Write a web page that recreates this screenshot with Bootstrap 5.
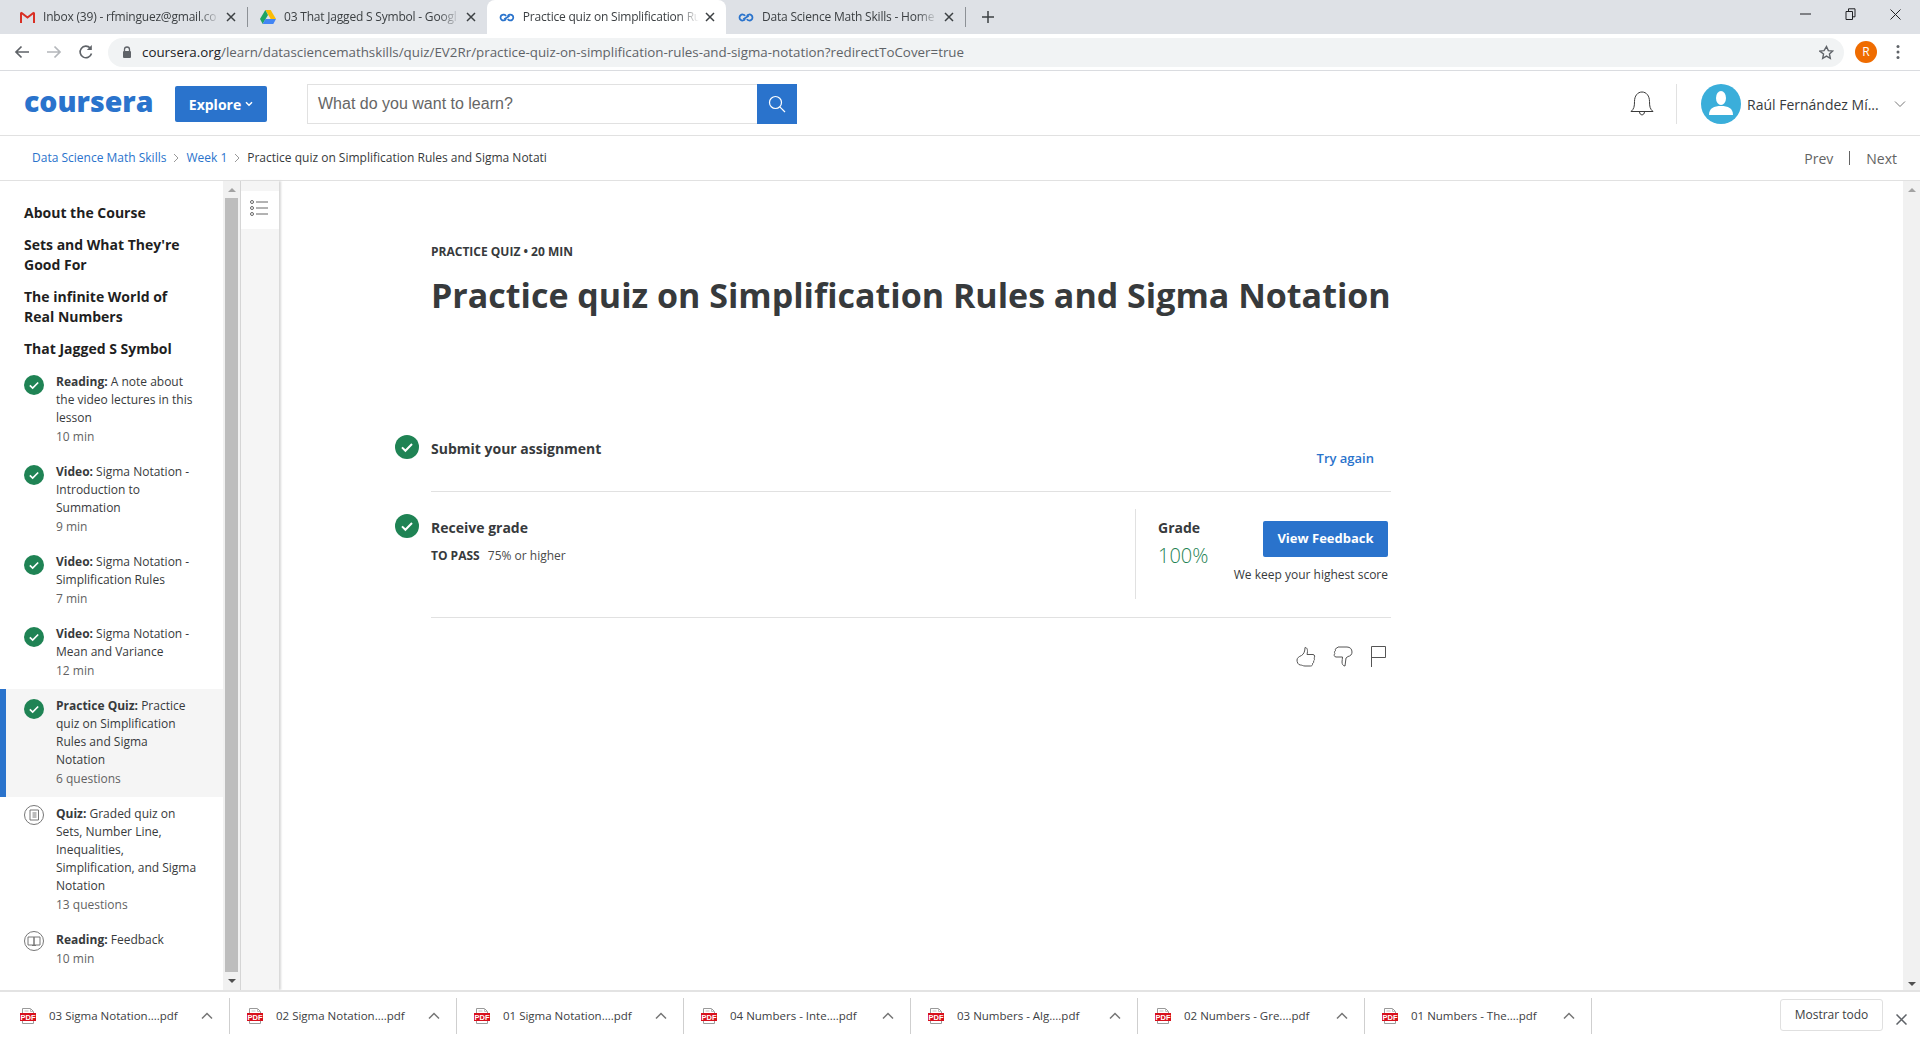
<!DOCTYPE html>
<html lang="en">
<head>
  <meta charset="UTF-8">
  <meta name="viewport" content="width=device-width, initial-scale=1.0">
  <title>Practice quiz on Simplification Rules and Sigma Notation</title>
  <link href="https://cdn.jsdelivr.net/npm/bootstrap@5.3.0/dist/css/bootstrap.min.css" rel="stylesheet">
  <style>
    html, body { height: 100%; overflow: hidden; }
    body { font-family: "Open Sans", "Liberation Sans", sans-serif; color: #373a3c; background: #fff; }
    a { text-decoration: none; }

    /* browser chrome */
    .tab-strip { height: 34px; background: #dee1e6; padding-left: 8px; }
    .tab-item { width: 239px; height: 34px; padding: 0 11px 0 12px; font-size: 12px; color: #3c4043; position: relative; }
    .tab-item.tab-on { background: #fff; border-radius: 8px 8px 0 0; color: #3c4043; }
    .tab-sep { border-right: 1px solid #8d9196; height: 20px; align-self: center; }
    .tab-label { flex: 1 1 auto; overflow: hidden; white-space: nowrap; margin-left: 8px; letter-spacing: -.2px;
      -webkit-mask-image: linear-gradient(to right, #000 88%, transparent); mask-image: linear-gradient(to right, #000 88%, transparent); }
    .tab-x { width: 10px; height: 10px; margin-left: 6px; flex: none; }
    .win-btns { margin-left: auto; gap: 34px; padding-right: 19px; height: 28px; }
    .addr-row { height: 37px; padding: 0 0 0 14px; border-bottom: 1px solid #dadce0; background: #fff; }
    .addr-pill { width: 1736px; height: 29px; margin-left: 14px; background: #f1f3f4; border-radius: 15px; padding: 0 10px 0 14px; font-size: 13.35px; color: #5f6368; }
    .addr-pill b { font-weight: 400; color: #202124; }
    .addr-url { margin-left: 10px; }
    .avatar-r { width: 22px; height: 22px; border-radius: 50%; background: #ef6c00; color: #fff; font-size: 12px; margin-left: 11px; }
    .menu-dots { margin-left: 19px; }

    /* coursera header */
    .site-head { height: 65px; padding: 2px 0 0 24px; border-bottom: 1px solid #e1e1e1; }
    .site-logo { width: 128px; color: #2a73cc; font-family: "Open Sans", sans-serif; font-weight: 800; font-size: 28.5px; line-height: 1; margin-top: -6px; }
    .explore-btn { width: 92px; height: 36px; margin-left: 23px; background: #2a73cc; border: 0; border-radius: 2px; color: #fff; font-size: 14px; font-weight: 700; padding: 0; }
    .search-box { margin-left: 40px; width: 490px; height: 40px; }
    .search-field { width: 450px; height: 40px; border: 1px solid #e1e1e1; border-right: 0; font-family: "Liberation Sans", sans-serif; font-size: 16px; color: #666; padding: 0 10px; line-height: 38px; }
    .search-btn { width: 40px; height: 40px; background: #2a73cc; }
    .head-right { margin-left: auto; padding-right: 14px; }
    .head-div { width: 1px; height: 40px; background: #e1e1e1; margin: 0 24px 0 22px; }
    .user-pic { width: 40px; height: 40px; }
    .user-name { width: 147px; margin-left: 6px; font-size: 14px; color: #373a3c; white-space: nowrap; }

    /* breadcrumb */
    .crumb-row { height: 45px; padding: 0 23px 0 32px; border-bottom: 1px solid #e1e1e1; font-size: 12px; color: #373a3c; }
    .crumb-row a { color: #2a73cc; }
    .crumb-gt { margin: 0 7px; width: 6px; height: 10px; }
    .pager { margin-left: auto; font-size: 14px; color: #636363; }
    .pager i { display: block; width: 1px; height: 14px; background: #636363; margin: 0 16px; }

    /* work area */
    .work-area { height: 809px; }
    .side-list { width: 223px; flex: none; padding-top: 22px; }
    .side-head { padding: 0 24px; margin-bottom: 12px; font-size: 14px; line-height: 20px; font-weight: 700; color: #1f1f1f; width: 210px; }
    .side-head-last { margin-bottom: 6px; }
    .side-item { display: flex; gap: 12px; padding: 8px 0 8px 24px; font-size: 12px; line-height: 18px; }
    .side-item.side-on { background: #f5f5f5; box-shadow: inset 6px 0 0 #2a73cc; }
    .side-item svg { margin-top: 2px; flex: none; }
    .side-item svg.ico-plain { margin-top: 0; }
    .side-text { width: 142px; color: #373a3c; }
    .side-text b { font-weight: 700; }
    .side-meta { line-height: 20px; color: #636363; }
    .scroll-track { width: 17px; flex: none; background: #f1f1f1; padding: 0 2px; }
    .scroll-thumb { background: #bdbdbd; height: 774px; flex: none; }
    .arrow-up, .arrow-dn { width: 0; height: 0; border-left: 4px solid transparent; border-right: 4px solid transparent; margin: 0 auto; }
    .arrow-up { border-bottom: 4px solid #a3a3a3; margin-top: 7px; margin-bottom: 6px; }
    .arrow-dn { border-top: 4px solid #505050; margin-top: 7px; }
    .outline-strip { width: 39px; flex: none; background: #f5f5f5; border-left: 1px solid #d5d5d5; box-shadow: 2px 0 2px #d8d8d8; padding-top: 10px; }
    .outline-btn { height: 38px; background: #fff; padding: 0 3px 4px 0; }

    .quiz-pane { flex: 1 1 auto; padding: 62px 0 0 116px; }
    .quiz-col { width: 996px; }
    .quiz-kicker { margin-left: 36px; font-size: 12px; line-height: 18px; font-weight: 700; color: #373a3c; }
    .quiz-title { margin: 11px 0 0 36px; font-size: 34px; line-height: 46px; font-weight: 700; color: #373a3c; white-space: nowrap; }
    .step-row { display: flex; gap: 12px; }
    .step-row > svg { flex: none; }
    .step-body { flex: 1 1 auto; border-bottom: 1px solid #e1e1e1; }
    .submit-step { margin-top: 117px; }
    .submit-step .step-body { height: 57px; }
    .step-name { font-size: 14px; line-height: 20px; font-weight: 700; color: #373a3c; }
    .try-link { color: #2a73cc; font-size: 13px; font-weight: 600; margin: 14px 17px 0 0; line-height: 18px; }
    .grade-icon { margin-top: 22px; }
    .grade-step { height: 126px; }
    .grade-left { padding-top: 26px; }
    .pass-note { font-size: 12px; line-height: 18px; margin-top: 9px; color: #4a4a4a; }
    .pass-note b { color: #373a3c; margin-right: 5px; }
    .grade-box { width: 256px; height: 90px; margin: 17px 0 0 0; border-left: 1px solid #e1e1e1; padding: 0 3px 0 22px; }
    .grade-info { padding-top: 9px; }
    .grade-num { font-size: 20px; line-height: 28px; font-weight: 300; color: #1f8354; margin-top: 4px; }
    .feedback-btn { width: 125px; height: 36px; margin-top: 12px; background: #2a73cc; color: #fff; border: 0; border-radius: 2px; font-size: 13px; font-weight: 700; padding: 0; }
    .keep-note { font-size: 12px; line-height: 18px; margin-top: 9px; color: #373a3c; white-space: nowrap; }
    .react-row { margin: 27px 5px 0 0; gap: 17px; height: 22px; }

    /* downloads */
    .dl-bar { height: 50px; border-top: 2px solid #e3e3e3; padding-top: 6px; }
    .dl-item { width: 227px; height: 36px; border-right: 1px solid #cfcfcf; flex: none; font-size: 11.5px; color: #3c4043; padding: 0 16px 0 17px; }
    .dl-first { width: 230px; padding-left: 20px; }
    .dl-name { margin-left: 13px; flex: 1 1 auto; white-space: nowrap; }
    .show-all { width: 103px; height: 32px; margin-left: auto; margin-top: 1px; background: #fff; border: 1px solid #e0e0e0; border-radius: 3px; font-size: 12px; color: #3c4043; padding: 0; }
    .dl-close { margin: 1px 13px 0 13px; }
    .pdf-word { font-family: "Liberation Sans", sans-serif; font-size: 7.5px; font-weight: 700; fill: #fff; }
  </style>
</head>
<body>
  <svg width="0" height="0" class="d-block">
    <symbol id="chk" viewBox="0 0 24 24"><circle cx="12" cy="12" r="12" fill="#1f8354"/><path d="M7 12.400l3.400 3.400L17 9" fill="none" stroke="#fff" stroke-width="2"/></symbol>
    <symbol id="tabx" viewBox="0 0 10 10"><path d="M1 1l8 8M9 1l-8 8" stroke="#3c4043" stroke-width="1.500"/></symbol>
    <symbol id="cinf" viewBox="0 0 18 10"><path d="M8 3.200A3.400 3.400 0 1 0 8 6.800M10 3.200A3.400 3.400 0 1 1 10 6.800M6 7l6-4" fill="none" stroke="#2a73cc" stroke-width="2"/></symbol>
    <symbol id="pdf" viewBox="0 0 16 16"><path d="M2.500 5V.5h8l3 3V5M2.500 13v2.500h11V13" fill="none" stroke="#9a9a9a"/><path d="M10.500.5v3h3M4.500 3h4" fill="none" stroke="#bdbdbd"/><rect y="5" width="16" height="8" fill="#d80f1c"/><text class="pdf-word" x="8" y="11.700" text-anchor="middle">PDF</text></symbol>
    <symbol id="caret" viewBox="0 0 12 8"><path d="M1 6.500l5-5 5 5" fill="none" stroke="#777" stroke-width="1.500"/></symbol>
  </svg>

  <div class="d-flex flex-column vh-100">
    <!-- browser tabs -->
    <div class="tab-strip d-flex">
      <div class="tab-item d-flex align-items-center">
        <svg width="15" height="12" viewBox="0 0 15 12"><path d="M1 12V1.500M14 12V1.500" stroke="#d93025" stroke-width="2"/><path d="M1 1.500l6.500 5 6.500-5" fill="none" stroke="#d93025" stroke-width="2"/></svg>
        <span class="tab-label">Inbox (39) - rfminguez@gmail.co</span>
        <svg class="tab-x"><use href="#tabx"/></svg>
      </div>
      <div class="tab-sep"></div>
      <div class="tab-item d-flex align-items-center">
        <svg width="16" height="14" viewBox="0 0 16 14"><path d="M5.300 0h5.400l5.300 9h-5.300z" fill="#fbbc04"/><path d="M5.300 0L0 9l2.700 5 5.300-9z" fill="#1fa463"/><path d="M2.700 14h10.600l2.700-5H5.400z" fill="#4285f4"/></svg>
        <span class="tab-label">03 That Jagged S Symbol - Googl</span>
        <svg class="tab-x"><use href="#tabx"/></svg>
      </div>
      <div class="tab-item tab-on d-flex align-items-center">
        <svg width="16" height="9"><use href="#cinf"/></svg>
        <span class="tab-label">Practice quiz on Simplification Ru</span>
        <svg class="tab-x"><use href="#tabx"/></svg>
      </div>
      <div class="tab-item d-flex align-items-center">
        <svg width="16" height="9"><use href="#cinf"/></svg>
        <span class="tab-label">Data Science Math Skills - Home</span>
        <svg class="tab-x"><use href="#tabx"/></svg>
      </div>
      <div class="tab-sep"></div>
      <svg class="align-self-center ms-3" width="12" height="12" viewBox="0 0 12 12"><path d="M6 0v12M0 6h12" stroke="#3c4043" stroke-width="1.500"/></svg>
      <div class="win-btns d-flex align-items-center">
        <svg width="11" height="10" viewBox="0 0 11 10"><path d="M0 5h11" stroke="#202124"/></svg>
        <svg width="11" height="12" viewBox="0 0 11 12"><path d="M1 3.500h6.500v8H1zM3.500 3.500V.8H10v8H7.500" fill="none" stroke="#202124"/></svg>
        <svg width="11" height="11" viewBox="0 0 11 11"><path d="M.5.500l10 10M10.500.500l-10 10" stroke="#202124"/></svg>
      </div>
    </div>

    <!-- address bar -->
    <div class="addr-row d-flex align-items-center">
      <svg width="16" height="14" viewBox="0 0 16 14"><path d="M15 7H2M7.500 1.500L2 7l5.500 5.500" fill="none" stroke="#5f6368" stroke-width="1.700"/></svg>
      <svg class="ms-3" width="16" height="14" viewBox="0 0 16 14"><path d="M1 7h13M8.500 1.500L14 7l-5.500 5.500" fill="none" stroke="#b4b7bb" stroke-width="1.700"/></svg>
      <svg class="ms-3" width="16" height="16" viewBox="0 0 16 16"><path d="M13.500 9.500a5.800 5.800 0 1 1-1.300-5.500" fill="none" stroke="#5f6368" stroke-width="1.600"/><path d="M13.800 1v5h-5z" fill="#5f6368"/></svg>
      <div class="addr-pill d-flex align-items-center">
        <svg width="10" height="12" viewBox="0 0 10 12"><path d="M2.500 5V3.500a2.500 2.500 0 0 1 5 0V5" fill="none" stroke="#5f6368" stroke-width="1.300"/><rect x="1" y="5" width="8" height="7" rx="1" fill="#5f6368"/></svg>
        <span class="addr-url"><b>coursera.org</b>/learn/datasciencemathskills/quiz/EV2Rr/practice-quiz-on-simplification-rules-and-sigma-notation?redirectToCover=true</span>
        <svg class="ms-auto" width="15" height="15" viewBox="0 0 24 24"><path d="M12 2.500l2.900 6.400 7 .8-5.200 4.700 1.400 6.900-6.100-3.500-6.100 3.500 1.400-6.900L1.100 9.700l7-.8z" fill="none" stroke="#5f6368" stroke-width="2.200"/></svg>
      </div>
      <div class="avatar-r d-flex align-items-center justify-content-center">R</div>
      <svg class="menu-dots" width="4" height="16" viewBox="0 0 4 16"><circle cx="2" cy="2.500" r="1.500" fill="#5f6368"/><circle cx="2" cy="8" r="1.500" fill="#5f6368"/><circle cx="2" cy="13.500" r="1.500" fill="#5f6368"/></svg>
    </div>

    <!-- site header -->
    <div class="site-head d-flex align-items-center">
      <div class="site-logo">coursera</div>
      <button class="explore-btn d-flex align-items-center justify-content-center gap-1">Explore
        <svg width="8" height="6" viewBox="0 0 8 6"><path d="M1 1.300l3 3 3-3" fill="none" stroke="#fff" stroke-width="1.500"/></svg>
      </button>
      <div class="search-box d-flex">
        <div class="search-field">What do you want to learn?</div>
        <div class="search-btn d-flex align-items-center justify-content-center">
          <svg width="18" height="18" viewBox="0 0 18 18"><circle cx="7.500" cy="7.500" r="6" fill="none" stroke="#fff" stroke-width="1.200"/><path d="M11.800 11.800l5.200 5.200" stroke="#fff" stroke-width="1.200"/></svg>
        </div>
      </div>
      <div class="head-right d-flex align-items-center">
        <svg width="24" height="26" viewBox="0 0 24 26"><path d="M1 20.500c3-2.500 3.500-5 3.500-10C4.500 5 7.500 1 12 1s7.500 4 7.500 9.500c0 5 .5 7.500 3.500 10zM9.500 20.500c0 4.500 5 4.500 5 0" fill="none" stroke="#3a3a3a"/></svg>
        <div class="head-div"></div>
        <svg class="user-pic" viewBox="0 0 40 40"><circle cx="20" cy="20" r="20" fill="#3aaeda"/><ellipse cx="20" cy="14" rx="5" ry="7" fill="#fff"/><path d="M8 31c0-7 5-9 12-9s12 2 12 9z" fill="#fff"/></svg>
        <div class="user-name">Raúl Fernández Mí...</div>
        <svg width="12" height="8" viewBox="0 0 12 8"><path d="M1 1.500l5 5 5-5" fill="none" stroke="#777"/></svg>
      </div>
    </div>

    <!-- breadcrumb -->
    <div class="crumb-row d-flex align-items-center">
      <a href="#">Data Science Math Skills</a>
      <svg class="crumb-gt" viewBox="0 0 6 10"><path d="M1 1l4 4-4 4" fill="none" stroke="#999"/></svg>
      <a href="#">Week 1</a>
      <svg class="crumb-gt" viewBox="0 0 6 10"><path d="M1 1l4 4-4 4" fill="none" stroke="#999"/></svg>
      <span>Practice quiz on Simplification Rules and Sigma Notati</span>
      <div class="pager d-flex align-items-center"><span>Prev</span><i></i><span>Next</span></div>
    </div>

    <!-- work area -->
    <div class="work-area d-flex">
      <div class="side-list">
        <div class="side-head">About the Course</div>
        <div class="side-head">Sets and What They're Good For</div>
        <div class="side-head">The infinite World of Real Numbers</div>
        <div class="side-head side-head-last">That Jagged S Symbol</div>
        <div class="side-item">
          <svg width="20" height="20"><use href="#chk"/></svg>
          <div class="side-text"><div><b>Reading:</b> A note about the video lectures in this lesson</div><div class="side-meta">10 min</div></div>
        </div>
        <div class="side-item">
          <svg width="20" height="20"><use href="#chk"/></svg>
          <div class="side-text"><div><b>Video:</b> Sigma Notation - Introduction to Summation</div><div class="side-meta">9 min</div></div>
        </div>
        <div class="side-item">
          <svg width="20" height="20"><use href="#chk"/></svg>
          <div class="side-text"><div><b>Video:</b> Sigma Notation - Simplification Rules</div><div class="side-meta">7 min</div></div>
        </div>
        <div class="side-item">
          <svg width="20" height="20"><use href="#chk"/></svg>
          <div class="side-text"><div><b>Video:</b> Sigma Notation - Mean and Variance</div><div class="side-meta">12 min</div></div>
        </div>
        <div class="side-item side-on">
          <svg width="20" height="20"><use href="#chk"/></svg>
          <div class="side-text"><div><b>Practice Quiz:</b> Practice quiz on Simplification Rules and Sigma Notation</div><div class="side-meta">6 questions</div></div>
        </div>
        <div class="side-item">
          <svg class="ico-plain" width="20" height="20" viewBox="0 0 20 20"><circle cx="10" cy="10" r="9.500" fill="none" stroke="#777"/><path d="M6 5h8.500v10H6zM8.500 8h4M8.500 10h4M8.500 12h4" fill="none" stroke="#777"/></svg>
          <div class="side-text"><div><b>Quiz:</b> Graded quiz on Sets, Number Line, Inequalities, Simplification, and Sigma Notation</div><div class="side-meta">13 questions</div></div>
        </div>
        <div class="side-item">
          <svg class="ico-plain" width="20" height="20" viewBox="0 0 20 20"><circle cx="10" cy="10" r="9.500" fill="none" stroke="#777"/><path d="M4 6h6v8H4zM10 6h6v8h-6zM8 14.500h4" fill="none" stroke="#777"/></svg>
          <div class="side-text"><div><b>Reading:</b> Feedback</div><div class="side-meta">10 min</div></div>
        </div>
      </div>
      <div class="scroll-track d-flex flex-column">
        <div class="arrow-up"></div>
        <div class="scroll-thumb"></div>
        <div class="arrow-dn"></div>
      </div>
      <div class="outline-strip">
        <div class="outline-btn d-flex align-items-center justify-content-center">
          <svg width="18" height="16" viewBox="0 0 18 16"><g fill="none" stroke="#666"><circle cx="2" cy="2" r="1.500"/><circle cx="2" cy="8" r="1.500"/><circle cx="2" cy="14" r="1.500"/><path d="M6 2h12M6 8h12M6 14h12"/></g></svg>
        </div>
      </div>

      <div class="quiz-pane">
        <div class="quiz-col">
          <div class="quiz-kicker">PRACTICE QUIZ • 20 MIN</div>
          <h1 class="quiz-title">Practice quiz on Simplification Rules and Sigma Notation</h1>

          <div class="step-row submit-step">
            <svg width="24" height="24"><use href="#chk"/></svg>
            <div class="step-body d-flex justify-content-between">
              <div class="step-name pt-1">Submit your assignment</div>
              <a class="try-link" href="#">Try again</a>
            </div>
          </div>

          <div class="step-row">
            <svg class="grade-icon" width="24" height="24"><use href="#chk"/></svg>
            <div class="step-body d-flex justify-content-between grade-step">
              <div class="grade-left">
                <div class="step-name">Receive grade</div>
                <div class="pass-note"><b>TO PASS</b> 75% or higher</div>
              </div>
              <div class="grade-box d-flex justify-content-between">
                <div class="grade-info">
                  <div class="step-name">Grade</div>
                  <div class="grade-num">100%</div>
                </div>
                <div class="d-flex flex-column align-items-end">
                  <button class="feedback-btn">View Feedback</button>
                  <div class="keep-note">We keep your highest score</div>
                </div>
              </div>
            </div>
          </div>

          <div class="react-row d-flex justify-content-end align-items-center">
            <svg width="20" height="21" viewBox="0 0 20 21"><path d="M5.500 9.500C8 8 9 5 9 1.500c2.500 0 3 3 2 7h6c2 0 2 3 1 3.500.8 1 .5 2.500-.5 3 .5 1 0 2.300-1 2.500.3 1.500-.5 2.500-2 2.500H9c-2 0-3-1-4.500-1C2 19 1 16 1 14c0-2 2-3.500 4.500-4.500z" fill="none" stroke="#555"/></svg>
            <svg width="20" height="21" viewBox="0 0 20 21"><path d="M5 1h9c3 0 5 2 5 5 0 2.500-1.500 4-4 4.500l-2 1.500-1 8c-2 0-3-2-3-4 0-2 .5-3 .5-5H3c-2 0-2.500-3-1-3.500C1 6.500 1.500 5 2.500 4.700 2 3.500 2.500 2 4 2z" fill="none" stroke="#555"/></svg>
            <svg width="16" height="21" viewBox="0 0 16 21"><path d="M1.500 21V.5h14v11h-14" fill="none" stroke="#555"/></svg>
          </div>
        </div>
      </div>

      <div class="scroll-track d-flex flex-column justify-content-between">
        <div class="arrow-up"></div>
        <div class="arrow-dn mb-1"></div>
      </div>
    </div>

    <!-- downloads -->
    <div class="dl-bar d-flex">
      <div class="dl-item dl-first d-flex align-items-center"><svg width="16" height="16"><use href="#pdf"/></svg><span class="dl-name">03 Sigma Notation....pdf</span><svg width="12" height="8"><use href="#caret"/></svg></div>
      <div class="dl-item d-flex align-items-center"><svg width="16" height="16"><use href="#pdf"/></svg><span class="dl-name">02 Sigma Notation....pdf</span><svg width="12" height="8"><use href="#caret"/></svg></div>
      <div class="dl-item d-flex align-items-center"><svg width="16" height="16"><use href="#pdf"/></svg><span class="dl-name">01 Sigma Notation....pdf</span><svg width="12" height="8"><use href="#caret"/></svg></div>
      <div class="dl-item d-flex align-items-center"><svg width="16" height="16"><use href="#pdf"/></svg><span class="dl-name">04 Numbers - Inte....pdf</span><svg width="12" height="8"><use href="#caret"/></svg></div>
      <div class="dl-item d-flex align-items-center"><svg width="16" height="16"><use href="#pdf"/></svg><span class="dl-name">03 Numbers - Alg....pdf</span><svg width="12" height="8"><use href="#caret"/></svg></div>
      <div class="dl-item d-flex align-items-center"><svg width="16" height="16"><use href="#pdf"/></svg><span class="dl-name">02 Numbers - Gre....pdf</span><svg width="12" height="8"><use href="#caret"/></svg></div>
      <div class="dl-item d-flex align-items-center"><svg width="16" height="16"><use href="#pdf"/></svg><span class="dl-name">01 Numbers - The....pdf</span><svg width="12" height="8"><use href="#caret"/></svg></div>
      <button class="show-all">Mostrar todo</button>
      <svg class="dl-close align-self-center" width="11" height="11" viewBox="0 0 11 11"><path d="M.5.500l10 10M10.500.500l-10 10" stroke="#5f6368" stroke-width="1.500"/></svg>
    </div>
  </div>

  <script src="https://cdn.jsdelivr.net/npm/bootstrap@5.3.0/dist/js/bootstrap.bundle.min.js"></script>
</body>
</html>
